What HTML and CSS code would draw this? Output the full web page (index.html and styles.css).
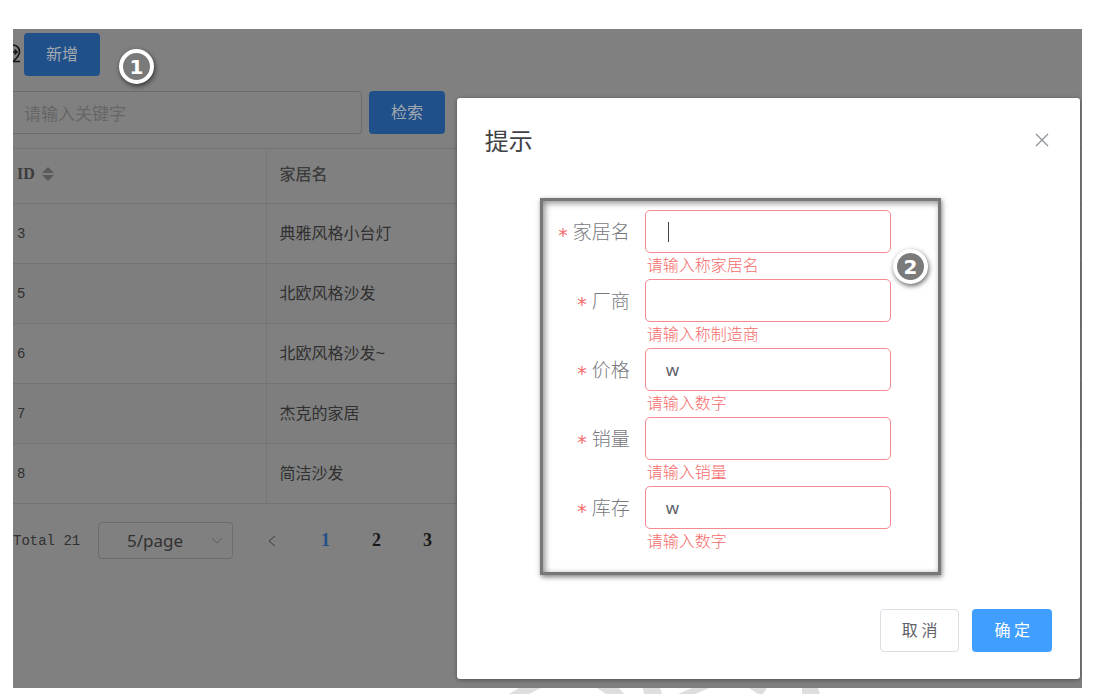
FILE: index.html
```html
<!DOCTYPE html>
<html lang="zh-CN">
<head>
<meta charset="utf-8">
<title>家居管理</title>
<link rel="stylesheet" href="styles.css">
</head>
<body>
<div class="page">
  <div class="screen">
    <main class="content">
      <div class="toolbar">
        <svg class="pin" width="10" height="24" viewBox="0 0 10 24" fill="none" stroke="#141414" stroke-width="1.6"><path d="M-1 2C4 2 6.500 5 6.500 9C6.500 12 4 15 0 18.500H7"/><path d="M-3 9H3.500M1.500 6.500L4 9L1.500 11.500"/></svg>
        <button class="btn btn-dim" type="button">新增</button>
      </div>
      <form class="search">
        <input class="search-input" type="text" placeholder="请输入关键字" aria-label="关键字">
        <button class="btn btn-dim" type="button">检索</button>
      </form>
      <table class="table">
        <colgroup><col class="col-id"><col class="col-name"><col></colgroup>
        <thead>
          <tr><th>ID <svg class="sort" width="12" height="16" viewBox="0 0 12 16" fill="#5a5a5a"><path d="M6 1L12 7H0zM6 15L12 9H0z"/></svg></th><th>家居名</th><th></th></tr>
        </thead>
        <tbody>
          <tr><td>3</td><td>典雅风格小台灯</td><td></td></tr>
          <tr><td>5</td><td>北欧风格沙发</td><td></td></tr>
          <tr><td>6</td><td>北欧风格沙发~</td><td></td></tr>
          <tr><td>7</td><td>杰克的家居</td><td></td></tr>
          <tr><td>8</td><td>简洁沙发</td><td></td></tr>
        </tbody>
      </table>
      <nav class="pager" aria-label="分页">
        <span class="total">Total 21</span>
        <span class="size">
          <select class="size-select" aria-label="每页条数"><option>5/page</option></select>
          <svg class="size-arrow" width="12" height="8" viewBox="0 0 12 8" fill="none" stroke="#5e5e5e"><path d="M1 1L6 6L11 1"/></svg>
        </span>
        <button class="page-btn prev" type="button" aria-label="上一页"><svg width="8" height="12" viewBox="0 0 8 12" fill="none" stroke="#3c3c3c"><path d="M7 1L1 6L7 11"/></svg></button>
        <button class="page-btn current" type="button">1</button>
        <button class="page-btn" type="button">2</button>
        <button class="page-btn" type="button">3</button>
      </nav>
    </main>
    <span class="badge badge-one">1</span>

    <section class="dialog" role="dialog" aria-labelledby="dialog-title">
      <header class="dialog-head">
        <h1 class="dialog-title" id="dialog-title">提示</h1>
        <button class="close" type="button" aria-label="关闭"><svg width="14" height="14" viewBox="0 0 14 14" fill="none" stroke="#909399" stroke-width="1.3"><path d="M1 1L13 13M13 1L1 13"/></svg></button>
      </header>
      <form class="form">
        <label class="label" for="f-name">家居名</label>
        <div class="field"><input class="input" id="f-name" type="text"><span class="caret"></span><p class="error">请输入称家居名</p></div>
        <label class="label" for="f-maker">厂商</label>
        <div class="field"><input class="input" id="f-maker" type="text"><p class="error">请输入称制造商</p></div>
        <label class="label" for="f-price">价格</label>
        <div class="field"><input class="input" id="f-price" type="text" value="w"><p class="error">请输入数字</p></div>
        <label class="label" for="f-sales">销量</label>
        <div class="field"><input class="input" id="f-sales" type="text"><p class="error">请输入销量</p></div>
        <label class="label" for="f-stock">库存</label>
        <div class="field"><input class="input" id="f-stock" type="text" value="w"><p class="error">请输入数字</p></div>
        <span class="badge badge-two">2</span>
      </form>
      <footer class="dialog-foot">
        <button class="btn btn-plain" type="button">取 消</button>
        <button class="btn btn-primary" type="button">确 定</button>
      </footer>
    </section>
  </div>
  <svg class="watermark" width="340" height="6" viewBox="0 0 340 6" fill="#dedede"><path d="M19 0H41L29 6H9zM97 0H119L124 6H106zM143 0H160L162 6H144zM192 0H209L195 6H178zM249 0H267L263 6H258zM302 0H318L320 6H302z"/></svg>
</div>
</body>
</html>
```
FILE: styles.css
```css
* { box-sizing: border-box; }

body {
  margin: 0;
  background: #fff;
  font-family: "Liberation Mono", "Noto Sans CJK SC", monospace;
  font-size: 16px;
}

button, input, select { font: inherit; margin: 0; }

.page {
  display: flex;
  flex-direction: column;
  min-height: 100vh;
  padding: 29px 21px 0 13px;
}

.screen {
  position: relative;
  flex: 1;
  overflow: hidden;
  background: #808080;
}

.content { padding-top: 4px; }

.toolbar {
  display: flex;
  align-items: center;
  gap: 1px;
}

.btn {
  height: 43px;
  padding: 0 21px 3px;
  border: 1px solid transparent;
  border-radius: 4px;
  font-family: "Noto Sans CJK SC", sans-serif;
  font-size: 16px;
  line-height: 24px;
}

.btn-dim { background: #20508a; color: #a4a9b0; }
.btn-plain { background: #fff; border-color: #dcdfe6; color: #606266; }
.btn-primary { background: #409eff; color: #fff; }

.search {
  display: flex;
  gap: 7px;
  margin-top: 15px;
}

.search-input {
  width: 349px;
  height: 43px;
  padding: 0 11px;
  border: 1px solid #6c6c6c;
  border-left: 0;
  border-radius: 0 4px 4px 0;
  background: transparent;
  color: #303030;
  font-family: "Noto Sans CJK SC", sans-serif;
  font-size: 17px;
}

.search-input::placeholder { color: #666; opacity: 1; }

.table {
  width: 100%;
  margin-top: 14px;
  border-collapse: collapse;
  table-layout: fixed;
  border-top: 1px solid #747474;
  color: #303030;
}

.col-id { width: 253px; }
.col-name { width: 400px; }

.table th, .table td {
  height: 60px;
  padding: 0 13px 4px;
  border-right: 1px solid #767676;
  border-bottom: 1px solid #747474;
  text-align: left;
  font-weight: 400;
}

.table th { height: 55px; padding-bottom: 6px; color: #3c3c3c; font-weight: 500; }
.table th:first-child, .table td:first-child { padding-left: 4px; }
.table td:first-child { padding-bottom: 0; font-size: 14px; }
.table th:first-child {
  padding-bottom: 4px;
  font-family: "Liberation Serif", serif;
  font-weight: 700;
}
.table th:last-child, .table td:last-child { border-right: 0; }
.table tbody tr:nth-child(even) { background: #7e7e7e; }
.sort { margin-left: 3px; vertical-align: -3px; }

.pager {
  display: flex;
  align-items: center;
  height: 37px;
  margin-top: 18px;
  color: #303030;
}

.total {
  width: 85px;
  font-size: 14px;
}

.size { display: flex; position: relative; width: 135px; }

.size-select {
  appearance: none;
  width: 100%;
  height: 37px;
  padding: 0 28px;
  border: 1px solid #6c6c6c;
  border-radius: 4px;
  background: transparent;
  color: #303030;
  font-family: "Noto Sans", sans-serif;
  font-size: 17px;
}

.size-arrow { position: absolute; right: 10px; top: 15px; }

.page-btn {
  width: 51px;
  height: 37px;
  padding: 0;
  border: 0;
  background: transparent;
  color: #181818;
  font-family: "Liberation Serif", serif;
  font-size: 18px;
  font-weight: 700;
}

.prev { width: 67px; padding-left: 35px; }
.prev svg { display: block; }
.current { color: #20508a; }

.badge {
  position: absolute;
  display: flex;
  align-items: center;
  justify-content: center;
  width: 35px;
  height: 35px;
  border: 4px solid #fff;
  border-radius: 50%;
  background: #7a7a7a;
  box-shadow: 1px 2px 5px rgba(0, 0, 0, 0.6);
  color: #fff;
  font-family: "DejaVu Sans", sans-serif;
  font-size: 20px;
  font-weight: 700;
  line-height: 24px;
}

.badge-one { left: 106px; top: 20px; }
.badge-two { right: 10px; top: 48px; }

.dialog {
  position: absolute;
  top: 69px;
  right: 2px;
  width: 58.3%;
  padding: 24px 28px 27px;
  border-radius: 3px;
  background: #fff;
  box-shadow: 0 1px 4px rgba(0, 0, 0, 0.4);
}

.dialog-head {
  display: flex;
  align-items: center;
  justify-content: space-between;
}

.dialog-title {
  margin: 0;
  padding-top: 4px;
  color: #404246;
  font-size: 24px;
  font-weight: 400;
  line-height: 36px;
}

.close {
  display: flex;
  padding: 0 3px 4px;
  border: 0;
  background: transparent;
}

.form {
  position: relative;
  display: grid;
  grid-template-columns: 87px 1fr;
  column-gap: 15px;
  margin: 36px 111px 0 55px;
  padding: 9px 47px 17px 0;
  border: 3px solid #777;
  box-shadow: 1px 2px 5px rgba(0, 0, 0, 0.5), inset 2px 2px 6px rgba(0, 0, 0, 0.45);
}

.label {
  padding-top: 3px;
  color: #77797e;
  font-size: 19px;
  font-weight: 300;
  line-height: 43px;
  text-align: right;
}

.label::before {
  content: "*";
  margin-right: 4px;
  color: #f56c6c;
  font-family: "DejaVu Sans Mono", monospace;
  font-size: 19px;
  vertical-align: -3px;
  line-height: 20px;
}

.field { position: relative; }

.input {
  display: block;
  width: 100%;
  height: 43px;
  padding: 0 20px;
  border: 1px solid #f58a90;
  border-radius: 5px;
  background: #fff;
  color: #606266;
  font-family: "Noto Sans", sans-serif;
  font-size: 17px;
}

.caret {
  position: absolute;
  left: 23px;
  top: 12px;
  width: 1px;
  height: 20px;
  background: #444;
}

.error {
  margin: 0;
  color: #f56c6c;
  font-family: "Noto Sans CJK SC", sans-serif;
  font-size: 16px;
  font-weight: 300;
  line-height: 22px;
  padding: 0 0 4px 2px;
}

.dialog-foot {
  display: flex;
  justify-content: flex-end;
  gap: 13px;
  margin-top: 34px;
}

.watermark {
  display: block;
  margin-left: 487px;
}
```
